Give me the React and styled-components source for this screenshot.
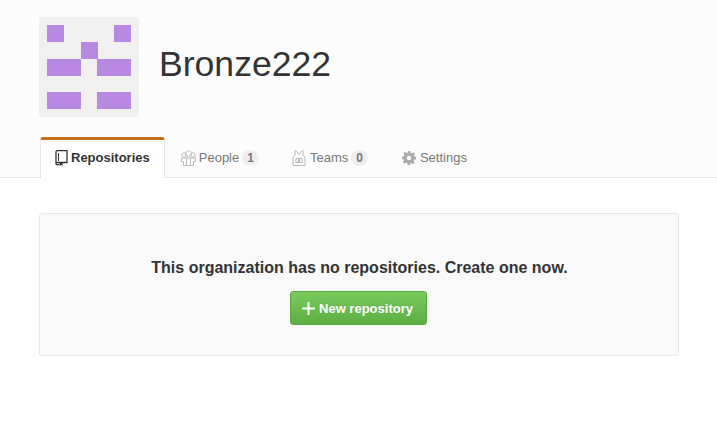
import React from 'react';
import styled, { createGlobalStyle } from 'styled-components';

const GlobalStyle = createGlobalStyle`
    html, body {
        margin: 0;
        padding: 0;
        background: #fff;
        font-family: "Liberation Sans", Arial, sans-serif;
    }
`

const Header = styled.div`
    box-sizing: border-box;
    height: 178px;
    padding: 17px 0 0 39px;
    background: #fcfcfc;
    border-bottom: 1px solid #eaeaea;
    display: flex;
    flex-direction: column;
`
const TitleRow = styled.div`
    display: flex;
    align-items: center;
    gap: 20px;
    height: 100px;
`
const Avatar = styled.svg`
    width: 100px;
    height: 100px;
    display: block;
`
const Title = styled.h1`
    margin: 0 0 5px;
    font-size: 35.6px;
    font-weight: 400;
    color: #333;
    line-height: 1;
`
const Tabs = styled.div`
    display: flex;
    align-items: flex-start;
    margin: 20px 0 0 1px;
`
const Tab = styled.div`
    display: flex;
    align-items: center;
    box-sizing: border-box;
    height: 41px;
    padding: ${p => p.$active ? '0 14px 3px 14px' : '0 0 3px 0'};
    margin-left: ${p => p.$gap || 0}px;
    font-size: 13px;
    font-weight: ${p => p.$active ? 700 : 400};
    color: ${p => p.$active ? '#333' : '#777'};
    background: ${p => p.$active ? '#fff' : 'transparent'};
    border-top: 3px solid ${p => p.$active ? '#c5701c' : 'transparent'};
    border-left: 1px solid ${p => p.$active ? '#e5e5e5' : 'transparent'};
    border-right: 1px solid ${p => p.$active ? '#e5e5e5' : 'transparent'};
    border-radius: 3px 3px 0 0;
`
const TabIcon = styled.svg`
    width: ${p => p.$w}px;
    height: 16px;
    margin-right: ${p => p.$mr}px;
    flex: none;
`
const Counter = styled.span`
    display: inline-block;
    margin-left: 3px;
    padding: 2px 5px;
    font-size: 12px;
    font-weight: 700;
    line-height: 12px;
    color: #777;
    background: #eee;
    border-radius: 8px;
`
const Main = styled.div`
    padding: 35px 39px 0 39px;
`
const Blank = styled.div`
    box-sizing: border-box;
    width: 640px;
    height: 143px;
    padding-top: 45px;
    background: #f9f9f9;
    border: 1px solid #e8e8e8;
    border-radius: 3px;
    display: flex;
    flex-direction: column;
    align-items: center;
`
const Message = styled.h3`
    margin: 0 0 14px 1px;
    font-size: 16px;
    line-height: 18px;
    font-weight: 700;
    color: #333;
`
const NewButton = styled.button`
    display: flex;
    align-items: center;
    justify-content: center;
    box-sizing: border-box;
    width: 137px;
    height: 34px;
    margin-right: 2px;
    padding: 0 1px 0 0;
    font-family: inherit;
    font-size: 13px;
    font-weight: 700;
    color: #fff;
    text-shadow: 0 -1px 0 rgba(0, 0, 0, 0.08);
    background: linear-gradient(#7acb5e, #5dae40);
    border: 1px solid #5ca941;
    border-radius: 3px;
`
const Plus = styled.svg`
    width: 13px;
    height: 13px;
    margin-right: 4px;
`

const cells = [
    [8, 8, 17, 17], [75, 8, 17, 17], [42, 25, 17, 17],
    [8, 42, 34, 17], [58, 42, 34, 17], [8, 75, 34, 17], [58, 75, 34, 17]
]

export default function App() {
    return (
        <>
            <GlobalStyle />
            <Header>
                <TitleRow>
                    <Avatar viewBox="0 0 100 100">
                        <rect width="100" height="100" rx="2" fill="#f0f0f0" />
                        {cells.map(([x, y, w, h]) => (
                            <rect key={`${x}-${y}`} x={x} y={y} width={w} height={h} fill="#b988e2" />
                        ))}
                    </Avatar>
                    <Title>Bronze222</Title>
                </TitleRow>
                <Tabs>
                    <Tab $active>
                        <TabIcon $w={13} $mr={3} viewBox="0 0 13 16" fill="none" stroke="#333" strokeWidth="1.3">
                            <path d="M1 13V2C1 1.200 1.600.700 2.400.700H12v11.800H2.400C1.600 12.500 1 13 1 13.700s.6 1 1.400 1H4" />
                            <path d="M4.500 12.500V16l1.500-1 1.500 1v-3.500z" fill="#333" stroke="none" />
                            <path d="M3.500 3v8" strokeWidth="1" />
                        </TabIcon>
                        Repositories
                    </Tab>
                    <Tab $gap={15}>
                        <TabIcon $w={15} $mr={3} viewBox="0 0 15 16" fill="none" stroke="#bbb" strokeWidth="1">
                            <circle cx="7.500" cy="3.500" r="2.800" />
                            <circle cx="3" cy="5" r="2.200" />
                            <circle cx="12" cy="5" r="2.200" />
                            <path d="M.5 8h14v3.500h-2v4h-10v-4h-2z" />
                            <path d="M5.500 8v7.500M9.500 8v7.500" />
                        </TabIcon>
                        People
                        <Counter>1</Counter>
                    </Tab>
                    <Tab $gap={31}>
                        <TabIcon $w={14} $mr={4} viewBox="0 0 14 16" fill="none" stroke="#bbb" strokeWidth="1">
                            <path d="M3 .5v3.500C3 5.500 2 6.500 1 7v8.500h12V7c-1-.5-2-1.500-2-3V.5l-1 0L7 4.500 4 .5z" />
                            <rect x="4" y="8.500" width="2.500" height="4" />
                            <rect x="7.500" y="8.500" width="2.500" height="4" />
                        </TabIcon>
                        Teams
                        <Counter>0</Counter>
                    </Tab>
                    <Tab $gap={32}>
                        <TabIcon $w={14} $mr={4} viewBox="0 0 16 16" fill="#aaa">
                            <path fillRule="evenodd" d="M6.500 0h3l.4 2.200 1.400.6 1.900-1.300 1.800 1.800-1.300 1.900.6 1.400L16 6.500v3l-2.200.4-.6 1.400 1.300 1.900-1.800 1.800-1.900-1.300-1.400.6L9.500 16h-3l-.4-2.200-1.400-.6-1.900 1.300-1.800-1.800 1.300-1.900-.6-1.400L0 9.500v-3l2.200-.4.6-1.400-1.300-1.900 1.800-1.800 1.900 1.300 1.400-.6zM8 5.500a2.500 2.500 0 1 0 0 5 2.500 2.500 0 0 0 0-5z" />
                        </TabIcon>
                        Settings
                    </Tab>
                </Tabs>
            </Header>
            <Main>
                <Blank>
                    <Message>This organization has no repositories. Create one now.</Message>
                    <NewButton>
                        <Plus viewBox="0 0 13 13">
                            <path d="M5.500 0h2v5.500H13v2H7.500V13h-2V7.500H0v-2h5.500z" fill="#fff" />
                        </Plus>
                        New repository
                    </NewButton>
                </Blank>
            </Main>
        </>
    )
}
